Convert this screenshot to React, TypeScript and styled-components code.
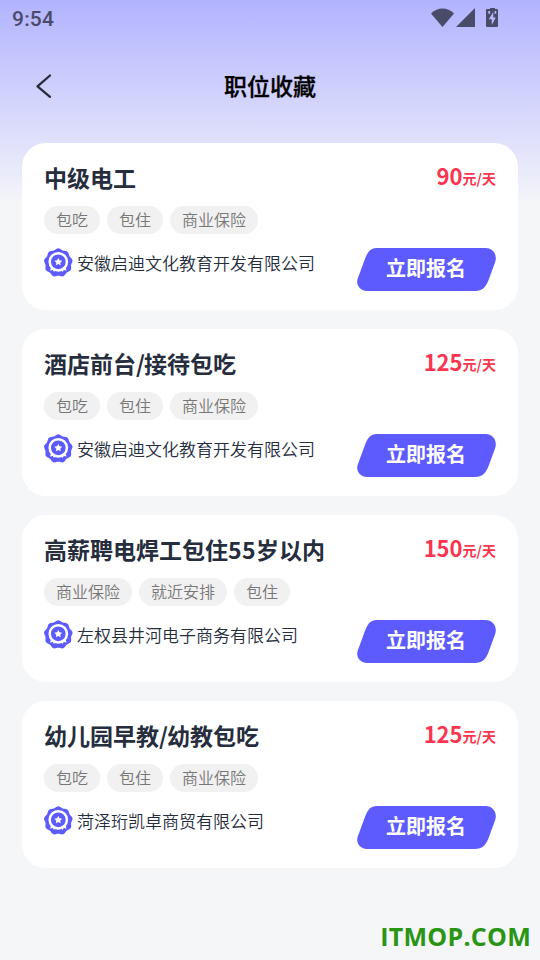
import React from "react";
import styled, { createGlobalStyle } from "styled-components";

const GlobalStyle = createGlobalStyle`
  * { box-sizing: border-box; }
  body {
    margin: 0;
    background: #f5f6f8;
    font-family: "Noto Sans CJK SC", "Noto Sans", sans-serif;
  }
`;

const Page = styled.div`
  display: flex;
  flex-direction: column;
  width: 540px;
  height: 960px;
  overflow: hidden;
  background: linear-gradient(#b2b3ff, #f3f4f9) 0 0 / 100% 200px no-repeat #f5f6f8;
`;

const StatusBar = styled.header`
  display: flex;
  align-items: center;
  justify-content: space-between;
  height: 38px;
  padding: 0 41px 0 12px;
  color: #4a4b69;
`;

const Clock = styled.span`
  font: 500 21px/38px Roboto, sans-serif;
  letter-spacing: 0.2px;
`;

const NavBar = styled.nav`
  display: grid;
  grid-template-columns: 50px 1fr 50px;
  align-items: center;
  height: 97px;
  padding: 0 18px 2px;
`;

const BackButton = styled.button`
  display: grid;
  place-items: center;
  width: 50px;
  height: 50px;
  padding: 0;
  border: 0;
  background: none;
`;

const PageTitle = styled.h1`
  margin: 0;
  padding-bottom: 2px;
  text-align: center;
  color: #000;
  font-size: 23px;
  line-height: 34px;
  font-weight: 500;
  -webkit-text-stroke: 0.3px #000;
`;

const JobList = styled.main`
  display: flex;
  flex-direction: column;
  flex: 1;
  gap: 19px;
  padding: 8px 22px 0;
`;

const Card = styled.article`
  display: flex;
  flex-direction: column;
  height: 167px;
  padding: 18px 22px 0;
  border-radius: 24px;
  background: #fff;
`;

const CardHead = styled.div`
  display: flex;
  justify-content: space-between;
  height: 36px;
`;

const JobTitle = styled.h2`
  margin: 0;
  color: #262d3d;
  font-size: 23px;
  line-height: 33px;
  font-weight: 700;
  white-space: nowrap;
`;

const Latin = styled.span<{ $spacing: number }>`
  letter-spacing: ${({ $spacing }) => $spacing}px;
`;

const Price = styled.div`
  color: #fa3550;
  font-size: 22px;
  line-height: 28px;
  font-weight: 700;
  white-space: nowrap;
`;

const Unit = styled.span`
  font-size: 14px;
  line-height: 1;
  vertical-align: 1px;
`;

const Tags = styled.div`
  display: flex;
  gap: 7px;
  margin-top: 9px;
`;

const Tag = styled.span`
  height: 28px;
  padding: 0 12px;
  border-radius: 14px;
  background: #f1f1f1;
  color: #777;
  font-size: 16px;
  line-height: 26px;
  font-weight: 350;
`;

const CardFoot = styled.div`
  display: flex;
  justify-content: space-between;
  margin-top: 14px;
`;

const Company = styled.div`
  display: flex;
  gap: 4px;
  color: #262d3d;
  font-size: 17px;
  line-height: 30px;
  font-weight: 350;
  white-space: nowrap;
`;

const ApplyButton = styled.button`
  display: grid;
  width: 139px;
  height: 43px;
  padding: 0;
  border: 0;
  background: none;
  color: #fff;
  font: 700 20px/40px "Noto Sans CJK SC", sans-serif;

  > * { grid-area: 1 / 1; }
`;

const ButtonLabel = styled.span`
  padding-right: 1px;
`;

const Watermark = styled.footer`
  padding-right: 9px;
  text-align: right;
  color: #2a9515;
  font-family: "Open Sans", sans-serif;
  font-size: 25px;
  line-height: 33px;
  letter-spacing: 0.25px;
  height: 40px;
  font-weight: 700;
`;

const StatusIcons = () => (
  <svg width="68" height="22" viewBox="0 1 68 22" fill="currentColor">
    <path d="M0 6.5C7-0.1 16-0.1 23 6.5L11.5 20z" />
    <path d="M44 1v19H25z" />
    <path
      fillRule="evenodd"
      d="M59 0h5v2h2q1 0 1 1v16q0 1-1 1H56q-1 0-1-1V3q0-1 1-1h3zM62.3 5l-4.5 7.3h3v5.7l4-7.4h-2.5zM57.3 4v2.8h1.8V4zM63.6 4v2.8h1.6V4z"
    />
  </svg>
);

const BackIcon = () => (
  <svg width="20" height="26" viewBox="0 0 20 26" fill="none">
    <path d="M17 2.5L4.5 13.3l12.5 10.5" stroke="#272c3c" strokeWidth="2.3" strokeLinecap="round" strokeLinejoin="round" />
  </svg>
);

// Nine-lobed scalloped outline of the certification badge.
const badgeOutline = Array.from({ length: 90 }, (_, i) => {
  const angle = (i / 90) * Math.PI * 2;
  const radius = 13.7 + 0.7 * Math.cos(angle * 9);
  return `${(14.3 + radius * Math.sin(angle)).toFixed(2)},${(14.7 - radius * Math.cos(angle)).toFixed(2)}`;
}).join(" ");

const BadgeIcon = () => (
  <svg width="29" height="30" viewBox="0 0 29 30" fill="none">
    <polygon points={badgeOutline} fill="#5d5bfe" />
    <circle cx="14.3" cy="13.8" r="8.6" stroke="#fff" strokeWidth="2.5" />
    <path d="M7.4 18.5L6 22.6 8.8 22.1 10.1 24 11.6 21.2zM21.2 18.5L22.6 22.6 19.8 22.1 18.5 24 17 21.2z" fill="#fff" />
    <path d="M14.3 9.9l1.2 2.45 2.7.4-1.95 1.9.45 2.7-2.4-1.3-2.4 1.3.45-2.7-1.95-1.9 2.7-.4z" fill="#fff" />
  </svg>
);

const ButtonShape = () => (
  <svg width="139" height="43" viewBox="0 0 139 43">
    <path
      d="M19.5 0H128.5C136 0 140.5 7 138.2 14L131.2 33C128.5 39.5 125 43 118 43H10C3 43-1.2 37 0.6 31L8.3 10C10.8 3.5 14 0 19.5 0Z"
      fill="#5d5bfe"
    />
  </svg>
);

interface Job {
  title: string;
  pay: number;
  tags: string[];
  company: string;
}

const jobs: Job[] = [
  { title: "中级电工", pay: 90, tags: ["包吃", "包住", "商业保险"], company: "安徽启迪文化教育开发有限公司" },
  { title: "酒店前台/接待包吃", pay: 125, tags: ["包吃", "包住", "商业保险"], company: "安徽启迪文化教育开发有限公司" },
  { title: "高薪聘电焊工包住55岁以内", pay: 150, tags: ["商业保险", "就近安排", "包住"], company: "左权县井河电子商务有限公司" },
  { title: "幼儿园早教/幼教包吃", pay: 125, tags: ["包吃", "包住", "商业保险"], company: "菏泽珩凯卓商贸有限公司" },
];

// Slashes are tightened and digits loosened between the full-width characters.
const spaced = (title: string) =>
  title.split(/(\/|\d+)/).map((part, i) =>
    i % 2 ? <Latin key={i} $spacing={part === "/" ? -0.9 : 0.4}>{part}</Latin> : part
  );

const JobCard = ({ job }: { job: Job }) => (
  <Card>
    <CardHead>
      <JobTitle>{spaced(job.title)}</JobTitle>
      <Price>{job.pay}<Unit>元/天</Unit></Price>
    </CardHead>
    <Tags>{job.tags.map((tag) => <Tag key={tag}>{tag}</Tag>)}</Tags>
    <CardFoot>
      <Company><BadgeIcon />{job.company}</Company>
      <ApplyButton><ButtonShape /><ButtonLabel>立即报名</ButtonLabel></ApplyButton>
    </CardFoot>
  </Card>
);

export default function App() {
  return (
    <>
      <GlobalStyle />
      <Page>
        <StatusBar><Clock>9:54</Clock><StatusIcons /></StatusBar>
        <NavBar>
          <BackButton aria-label="返回"><BackIcon /></BackButton>
          <PageTitle>职位收藏</PageTitle>
        </NavBar>
        <JobList>{jobs.map((job) => <JobCard key={job.title} job={job} />)}</JobList>
        <Watermark>ITMOP.COM</Watermark>
      </Page>
    </>
  );
}
